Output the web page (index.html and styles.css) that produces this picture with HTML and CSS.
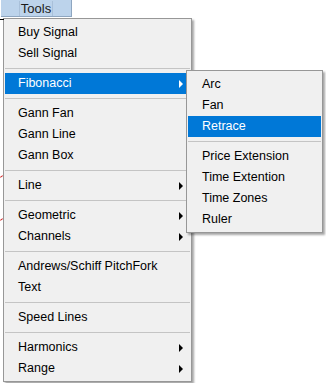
FILE: index.html
```html
<!DOCTYPE html>
<html lang="en">

<head>
    <meta charset="UTF-8" />
    <meta name="viewport" content="width=device-width, initial-scale=1.0" />
    <title>Tools menu</title>
    <link rel="stylesheet" href="styles.css">
</head>

<body>
    <div class="chart">
        <span class="mark mark-axis"></span>
        <span class="mark mark-red mark-1"></span>
        <span class="mark mark-red mark-2"></span>

        <div class="menubar">
            <div class="tab"><span>Tools</span></div>
        </div>

        <ul class="menu">
            <li class="item">Buy Signal</li>
            <li class="item">Sell Signal</li>
            <li class="sep"></li>
            <li class="item has-sub active">Fibonacci
                <ul class="menu submenu">
                    <li class="item">Arc</li>
                    <li class="item">Fan</li>
                    <li class="item active">Retrace</li>
                    <li class="sep"></li>
                    <li class="item">Price Extension</li>
                    <li class="item">Time Extention</li>
                    <li class="item">Time Zones</li>
                    <li class="item">Ruler</li>
                </ul>
            </li>
            <li class="sep"></li>
            <li class="item">Gann Fan</li>
            <li class="item">Gann Line</li>
            <li class="item">Gann Box</li>
            <li class="sep"></li>
            <li class="item has-sub">Line</li>
            <li class="sep"></li>
            <li class="item has-sub">Geometric</li>
            <li class="item has-sub">Channels</li>
            <li class="sep"></li>
            <li class="item">Andrews/Schiff PitchFork</li>
            <li class="item">Text</li>
            <li class="sep"></li>
            <li class="item">Speed Lines</li>
            <li class="sep"></li>
            <li class="item has-sub">Harmonics</li>
            <li class="item has-sub">Range</li>
        </ul>
    </div>
</body>

</html>
```

FILE: styles.css
```css
* {
    box-sizing: border-box;
}

body {
    margin: 0;
    background: #fff;
    font-family: "Liberation Sans", Arial, sans-serif;
    font-size: 12.5px;
    color: #000;
}

.chart {
    position: relative;
    width: 326px;
    height: 383px;
    overflow: hidden;
}

/* bits of the chart behind the menu */
.mark {
    position: absolute;
    display: block;
}

.mark-axis {
    left: 0;
    top: 19px;
    width: 4px;
    height: 1px;
    background: #000;
}

.mark-red {
    left: 0;
    width: 3px;
    height: 1px;
    background: #d02020;
    transform: rotate(-35deg);
}

.mark-1 {
    top: 176px;
}

.mark-2 {
    top: 219px;
}

.menubar {
    height: 18px;
    padding-left: 1px;
}

.tab {
    width: 71px;
    height: 17px;
    background: #bcd3eb;
    border-right: 1px solid #8ea6c0;
    border-bottom: 1px solid #8ea6c0;
    display: flex;
    justify-content: center;
    align-items: center;
}

.tab span {
    padding: 0 1px;
    line-height: 15px;
    font-size: 13px;
    color: #1a1a1a;
    border-left: 1px solid #a9c0d9;
    border-right: 1px solid #a9c0d9;
}

.menu {
    margin: 0 0 0 3px;
    padding: 3px 1px 2px;
    list-style: none;
    width: 189px;
    background: #f0f0f0;
    border: 1px solid #979797;
    box-shadow: 2px 2px 2px rgba(0, 0, 0, 0.35);
}

.item {
    position: relative;
    height: 21px;
    line-height: 21px;
    padding-left: 13px;
    padding-right: 7px;
    display: flex;
    align-items: center;
    white-space: nowrap;
}

.item.active {
    background: #0078d7;
    color: #fff;
}

.has-sub::after {
    content: "";
    margin-left: auto;
    width: 0;
    height: 0;
    border-left: 4px solid #000;
    border-top: 4px solid transparent;
    border-bottom: 4px solid transparent;
}

.has-sub.active::after {
    border-left-color: #fff;
}

.sep {
    height: 9px;
    padding-top: 4px;
}

.sep::before {
    content: "";
    display: block;
    height: 1px;
    background: #c4c4c4;
}

.submenu {
    position: absolute;
    left: 181px;
    top: -3px;
    width: 137px;
    margin: 0;
    color: #000;
    z-index: 2;
}

.submenu .item {
    padding-left: 14px;
}
```
